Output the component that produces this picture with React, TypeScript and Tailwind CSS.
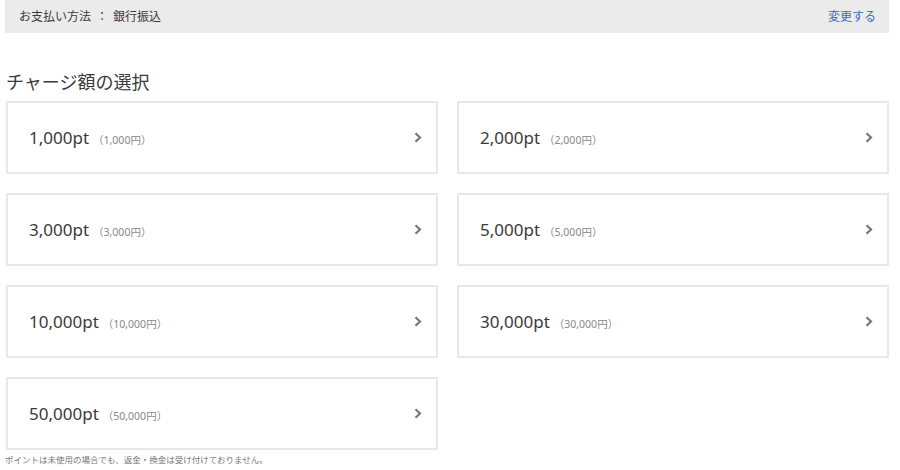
const options = [
  { pt: "1,000", yen: "1,000" },
  { pt: "2,000", yen: "2,000" },
  { pt: "3,000", yen: "3,000" },
  { pt: "5,000", yen: "5,000" },
  { pt: "10,000", yen: "10,000" },
  { pt: "30,000", yen: "30,000" },
  { pt: "50,000", yen: "50,000" },
];

// small bold chevron, like the one in the list rows
const Chevron = () => (
  <svg width="8" height="11" viewBox="0 0 8 11" fill="none" className="text-[#777]">
    <polyline points="1.5,1.3 6,5.5 1.5,9.7" stroke="currentColor" strokeWidth="2.2" />
  </svg>
);

const ChargeOption = ({ pt, yen }: { pt: string; yen: string }) => (
  <button className="flex h-[73px] items-center justify-between border-2 border-[#e8e8e8] bg-white pl-[21px] pr-[14px] text-left">
    <span className="flex items-baseline">
      <span className="text-[17px] text-[#3a3a3a]">{pt}pt</span>
      <span className="ml-[4px] text-[10.5px] text-[#888]">（{yen}円）</span>
    </span>
    <Chevron />
  </button>
);

export default function App() {
  return (
    <div
      className="w-[900px] bg-white pl-[6px] pr-[11px]"
      style={{ fontFamily: '"Noto Sans", "Noto Sans CJK JP", sans-serif' }}
    >
      {/* payment method bar */}
      <div className="-ml-px flex h-[33px] items-center justify-between bg-[#ebebeb] pl-[14px] pr-[13px] text-[12px]">
        <span className="flex items-center text-[#3a3a3a]">
          お支払い方法
          <span className="mx-[5px]">：</span>
          銀行振込
        </span>
        <a className="text-[#3b6db5]">変更する</a>
      </div>

      <h2 className="mt-[37px] text-[18px] leading-[24px] text-[#3a3a3a]">チャージ額の選択</h2>

      <div className="mt-[7px] grid grid-cols-2 gap-x-[19px] gap-y-[19px]">
        {options.map((o) => (
          <ChargeOption key={o.pt} pt={o.pt} yen={o.yen} />
        ))}
      </div>

      <p className="-ml-px mt-[4px] text-[8.5px] leading-[12px] text-[#777]">
        ポイントは未使用の場合でも、返金・換金は受け付けておりません。
      </p>
    </div>
  );
}
